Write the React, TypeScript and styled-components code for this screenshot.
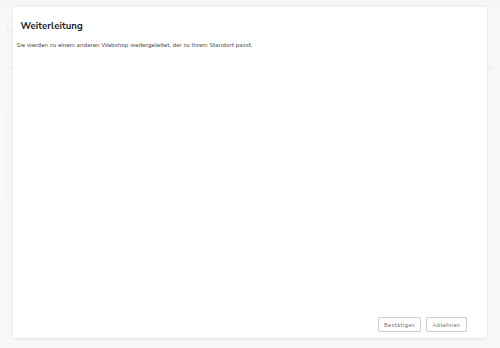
import React from "react";
import styled, { createGlobalStyle } from "styled-components";

const GlobalStyle = createGlobalStyle`
  html, body {
    margin: 0;
    padding: 0;
    width: 500px;
    height: 348px;
    overflow: hidden;
    background: #f4f4f4;
    font-family: "Nunito Sans", Lato, "Open Sans", sans-serif;
  }
`;

const Page = styled.div`
  position: relative;
  width: 500px;
  height: 348px;
  overflow: hidden;
  background: #f7f7f7;
`;

const BackTop = styled.div`
  height: 7px;
  background: #efefef;
`;

const BackContent = styled.div`
  padding: 14px 6px 0 6px;
  display: flex;
  flex-direction: column;
  color: #e4e4e4;
`;

const BackHeading = styled.div`
  font-size: 16px;
  font-weight: 700;
  color: #e2e2e2;
  height: 20px;
`;

const BackSub = styled.div`
  font-size: 5px;
  color: #e8e8e8;
  margin-top: 4px;
`;

const BackRule = styled.div`
  margin-top: 16px;
  height: 1px;
  background: #dedede;
  width: 488px;
`;

const BackCard = styled.div`
  margin-top: 42px;
  width: 8px;
  height: 92px;
  background: #f3efe9;
`;

const Overlay = styled.div`
  position: absolute;
  inset: 0;
  background: rgba(250, 250, 250, 0.55);
  display: flex;
  align-items: flex-start;
  justify-content: center;
  padding-top: 7px;
`;

const Modal = styled.div`
  width: 474px;
  height: 331px;
  background: #ffffff;
  box-shadow: 0 1px 3px rgba(0, 0, 0, 0.08), 0 0 1px rgba(0, 0, 0, 0.06);
  display: flex;
  flex-direction: column;
  margin-left: -1px;
`;

const Title = styled.h2`
  margin: 0;
  padding: 12px 8px 0 8px;
  font-size: 9.5px;
  font-weight: 700;
  color: #222;
  letter-spacing: 0.1px;
`;

const Body = styled.p`
  margin: 0;
  padding: 9px 4px 0 4px;
  font-size: 6.2px;
  letter-spacing: 0.05px;
  color: #444;
  flex: 1;
`;

const Footer = styled.div`
  display: flex;
  justify-content: flex-end;
  gap: 5px;
  padding: 0 20px 6px 0;
`;

const Button = styled.button`
  height: 15px;
  padding: 0 5px;
  background: #fff;
  border: 1px solid #cfcfcf;
  border-radius: 1px;
  font-family: inherit;
  font-size: 5.5px;
  letter-spacing: 0.5px;
  color: #666;
  cursor: pointer;
`;

export default function App() {
  return (
    <Page>
      <GlobalStyle />
      <BackTop />
      <BackContent>
        <BackHeading>IS</BackHeading>
        <BackSub>ro</BackSub>
        <BackRule />
        <BackCard />
      </BackContent>
      <Overlay>
        <Modal>
          <Title>Weiterleitung</Title>
          <Body>
            Sie werden zu einem anderen Webshop weitergeleitet, der zu Ihrem
            Standort passt.
          </Body>
          <Footer>
            <Button>Bestätigen</Button>
            <Button>Ablehnen</Button>
          </Footer>
        </Modal>
      </Overlay>
    </Page>
  );
}
